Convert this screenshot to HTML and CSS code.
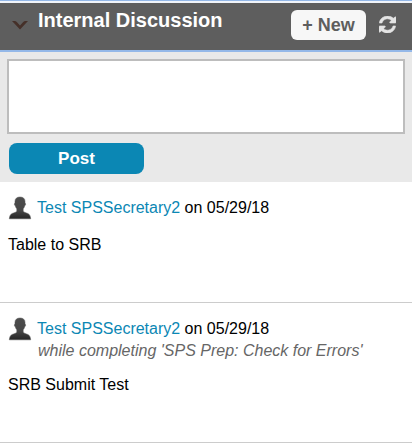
FILE: index.html
```html
<!DOCTYPE html>
<html lang="en">
<head>
    <meta charset="UTF-8">
    <meta name="viewport" content="width=device-width, initial-scale=1.0">
    <title>Internal Discussion</title>
    <link rel="stylesheet" href="styles.css">
</head>
<body>
    <!-- Shared person icon -->
    <svg class="defs" width="0" height="0" aria-hidden="true">
        <defs>
            <linearGradient id="person-fill" x1="0" y1="0" x2="0" y2="1">
                <stop offset="0" stop-color="#4c4c4c"/>
                <stop offset="0.6" stop-color="#474747"/>
                <stop offset="1" stop-color="#262626"/>
            </linearGradient>
            <symbol id="person" viewBox="0 0 24 24">
                <path fill="url(#person-fill)" stroke="#555" stroke-opacity="0.5" stroke-width="1" d="M12 1C8.800 1 7 2.600 7 5.300v1.700c-.9.2-.8 2.400.3 2.700.3 1.300.8 2.300 1.500 3.100v2.400c-.8 1.100-2.800 1.500-4.600 2.300C2.300 18.300 1.600 20 1.300 22.800h21.400c-.3-2.800-1-4.500-2.900-5.300-1.800-.8-3.800-1.200-4.600-2.300v-2.400c.7-.8 1.200-1.800 1.500-3.100 1.100-.3 1.200-2.500.3-2.700V5.300C17 2.600 15.200 1 12 1z"/>
            </symbol>
        </defs>
    </svg>

    <section class="discussion">
        <header class="discussion-header">
            <button class="toggle" type="button" aria-label="Collapse">
                <svg width="16" height="9" viewBox="0 0 16 9"><path d="M0 0h2.500Q4 0 5 1.200L8 4.500 11 1.200Q12 0 13.500 0H16L8 8.500z" fill="#453029"/></svg>
            </button>
            <h1>Internal Discussion</h1>
            <button class="new-button" type="button">+ New</button>
            <button class="refresh" type="button" aria-label="Refresh">
                <svg width="17" height="17" viewBox="0 0 1536 1536"><path fill="#e4e4e4" stroke="#e4e4e4" stroke-width="50" d="M1511 928q0 5-1 7-64 268-268 434.500t-478 166.500q-146 0-282.500-55t-243.500-157l-129 129q-19 19-45 19t-45-19-19-45v-448q0-26 19-45t45-19h448q26 0 45 19t19 45-19 45l-137 137q71 66 161 102t187 36q134 0 250-65t186-179q11-17 53-117 8-23 30-23h192q13 0 22.500 9.500t9.500 22.500zm25-800v448q0 26-19 45t-45 19h-448q-26 0-45-19t-19-45 19-45l138-138q-148-137-349-137-134 0-250 65t-186 179q-11 17-53 117-8 23-30 23h-199q-13 0-22.500-9.500t-9.500-22.500v-7q65-268 270-434.500t480-166.500q146 0 284 55.500t245 156.500l130-129q19-19 45-19t45 19 19 45z"/></svg>
            </button>
        </header>

        <form class="post-form">
            <textarea aria-label="Comment"></textarea>
            <button class="post-button" type="button">Post</button>
        </form>

        <!-- Comments -->
        <article class="comment">
            <div class="comment-head">
                <svg class="avatar"><use href="#person"/></svg>
                <div><a href="#">Test SPSSecretary2</a> on 05/29/18</div>
            </div>
            <p class="message">Table to SRB</p>
        </article>
        <article class="comment">
            <div class="comment-head">
                <svg class="avatar"><use href="#person"/></svg>
                <div><a href="#">Test SPSSecretary2</a> on 05/29/18</div>
            </div>
            <div class="context">while completing 'SPS Prep: Check for Errors'</div>
            <p class="message">SRB Submit Test</p>
        </article>
    </section>
</body>
</html>
```

FILE: styles.css
```css
* {
    box-sizing: border-box;
}
body {
    font-family: Arial, "Liberation Sans", sans-serif;
    font-size: 16px;
    line-height: 20px;
    background-color: #fff;
    color: #000;
    margin: 0;
}
button {
    font-family: inherit;
    border: 0;
    padding: 0;
    cursor: pointer;
}
svg {
    display: block;
}
.defs {
    position: absolute;
}
.discussion {
    border-top: 1px solid #94b8e8;
    padding-top: 2px;
    background-color: #f0f4fa;
}
.discussion-header {
    display: flex;
    align-items: flex-start;
    padding: 7px 16px 10px 12px;
    background-color: #5e5e5e;
    border-bottom: 2px solid #94b8e8;
}
.discussion-header h1 {
    flex: 1;
    margin: 0;
    font-size: 20px;
    line-height: 20px;
    color: #fff;
}
.toggle {
    width: 26px;
    padding-top: 11px;
    background: none;
}
.new-button {
    width: 75px;
    height: 30px;
    border-radius: 6px;
    background-color: #f7f7f7;
    color: #5e5e5e;
    font-size: 18px;
    font-weight: bold;
}
.refresh {
    margin-left: 13px;
    padding-top: 6px;
    background: none;
}
.post-form {
    padding: 7px 7px 8px;
    background-color: #e9e9e9;
}
.post-form textarea {
    display: block;
    width: 100%;
    height: 75px;
    padding: 4px;
    border: 2px solid #bdbdbd;
    border-radius: 0;
    background-color: #fff;
    font: inherit;
    resize: none;
}
.post-button {
    display: block;
    width: 135px;
    height: 31px;
    margin: 9px 2px 0;
    border-radius: 8px;
    background-color: #0b87b4;
    color: #fff;
    font-size: 17px;
    font-weight: bold;
}
.comment {
    padding: 14px 8px 47px;
    background-color: #fff;
    border-bottom: 1px solid #ccc;
}
.comment-head {
    display: flex;
    gap: 5px;
    line-height: 23px;
}
.comment-head a {
    color: #0b87b4;
    text-decoration: none;
}
.avatar {
    width: 24px;
    height: 24px;
    margin-bottom: -1px;
}
.context {
    margin: 3px 0 0 30px;
    line-height: 16px;
    font-style: italic;
    color: #666;
}
.message {
    margin: 16px 0 0;
}
```
